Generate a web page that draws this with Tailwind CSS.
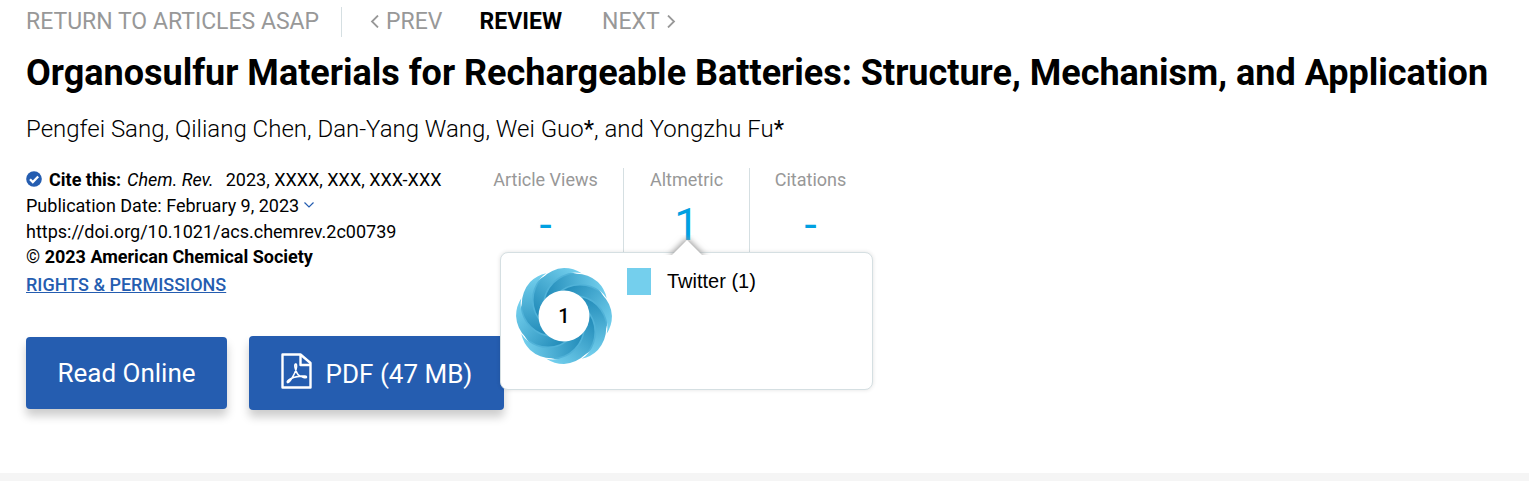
<!DOCTYPE html>
<html lang="en">
<head>
<meta charset="utf-8">
<title>Organosulfur Materials for Rechargeable Batteries</title>
<script src="https://cdn.jsdelivr.net/npm/@tailwindcss/browser@4"></script>
</head>
<body class="bg-white font-[Roboto,sans-serif] text-black">
<main class="px-[26px] pt-[7px]">
  <nav class="flex h-[30px] items-center text-[23px] leading-[28px] text-[#989898]" aria-label="Article navigation">
    <a href="#" class="mr-[22px]">RETURN TO ARTICLES ASAP</a>
    <a href="#" class="flex h-[30px] items-center gap-[7px] border-l border-[#d5dfe2] pl-[28px]">
      <svg class="mb-0.5 h-[13px] w-[9px]" viewBox="0 0 9 13" fill="none" stroke="currentColor" stroke-width="1.8"><path d="M8 .5 2 6.500 8 12.500"/></svg>PREV</a>
    <span class="ml-[37px] font-bold text-black">REVIEW</span>
    <a href="#" class="ml-[40px] flex items-center gap-[7px]">NEXT<svg class="mb-0.5 h-[13px] w-[9px]" viewBox="0 0 9 13" fill="none" stroke="currentColor" stroke-width="1.8"><path d="M1 .5 7 6.500 1 12.500"/></svg></a>
  </nav>
  <h1 class="mt-[12px] text-[36px] leading-[48px] font-bold">Organosulfur Materials for Rechargeable Batteries: Structure, Mechanism, and Application</h1>
  <p class="mt-[16px] text-[24px] leading-[32px] font-light">Pengfei Sang, Qiliang Chen, Dan-Yang Wang, Wei Guo<span class="font-normal">*</span>, and Yongzhu Fu<span class="font-normal">*</span></p>

  <div class="mt-[22px] flex items-start">
    <section class="w-[442px] text-[18px] leading-[26px]">
      <p class="flex items-center"><svg class="mr-[7px] mb-0.5 h-4 w-4" viewBox="0 0 16 16"><circle cx="8" cy="8" r="7.800" fill="#255db0"/><path d="m4 8.200 2.800 2.800L12.200 5.500" fill="none" stroke="#fff" stroke-width="2.300"/></svg><b class="mr-[6px] font-bold">Cite this:</b><i class="mr-[12px] font-normal">Chem. Rev.</i>2023, XXXX, XXX, XXX-XXX</p>
      <p class="flex items-center">Publication Date: February 9, 2023<button type="button" aria-label="Show publication history" class="mb-0.5 ml-[5px] text-[#255db0]"><svg class="h-[6px] w-[10px]" viewBox="0 0 10 6" fill="none" stroke="currentColor" stroke-width="1.200"><path d="m.5.5 4.500 4.500L9.500.5"/></svg></button></p>
      <p><a href="#">https://doi.org/10.1021/acs.chemrev.2c00739</a></p>
      <p class="leading-6 font-bold"><span class="font-normal">©</span> 2023 American Chemical Society</p>
      <p class="mt-[3px]"><a href="#" class="font-medium text-[#255db0] underline">RIGHTS &amp; PERMISSIONS</a></p>
    </section>
    <section class="relative flex h-[90px] pt-px text-center text-[18px] leading-6 text-[#989898]" aria-label="Article metrics">
      <div class="w-[155px]"><div>Article Views</div><div class="mt-[7px] text-[44px] leading-[52px] text-[#00a0e1]">-</div></div>
      <div class="w-[127px] border-x border-[#d5dfe2]"><div>Altmetric</div><a href="#" class="mt-[7px] block text-[44px] leading-[52px] text-[#00a0e1]">1</a></div>
      <div class="w-[121px]"><div>Citations</div><div class="mt-[7px] text-[44px] leading-[52px] text-[#00a0e1]">-</div></div>

      <div role="tooltip" class="absolute top-[85px] left-[32px] z-10 flex h-[138px] w-[373px] items-start rounded-lg border border-[#d5dfe2] bg-white p-[15px] text-left text-black shadow-[0_0_4px_rgba(0,0,0,0.12)]">
        <svg class="absolute -top-[18px] left-[162px] h-[24px] w-[48px]" viewBox="0 0 48 24"><defs><filter id="soft" x="-30%" y="-30%" width="160%" height="160%"><feGaussianBlur stdDeviation="3"/></filter><clipPath id="tip"><path d="M0 0H48V20H0Z"/></clipPath></defs><g clip-path="url(#tip)"><path d="M24 3 43 22H5Z" fill="#999" filter="url(#soft)"/></g><path d="M24 5 43 24H5Z" fill="#fff"/></svg>
        <svg class="h-24 w-24" viewBox="-48 -48 96 96" role="img" aria-label="Altmetric score 1">
          <defs>
            <linearGradient id="shade" gradientUnits="userSpaceOnUse" x1="42" y1="-22" x2="-16" y2="-16"><stop offset="0" stop-color="#74d0ee"/><stop offset="1" stop-color="#258ebb"/></linearGradient>
            <path id="strand" fill="url(#shade)" d="M42.700-17.700A32 32 0 0 0-16 0L-11.300 11.300A32 32 0 0 1 33.900-33.900A32 32 0 0 1 42.700-17.700Z"/>
          </defs>
          <circle r="44" fill="#50b2d8"/>
          <use href="#strand"/><use href="#strand" transform="rotate(45)"/><use href="#strand" transform="rotate(90)"/><use href="#strand" transform="rotate(135)"/><use href="#strand" transform="rotate(180)"/><use href="#strand" transform="rotate(225)"/><use href="#strand" transform="rotate(270)"/><use href="#strand" transform="rotate(315)"/>
          <circle r="25.500" fill="#fff"/><text y="7" text-anchor="middle" font-family="Roboto" font-size="20" font-weight="500" fill="#000">1</text>
        </svg>
        <div class="ml-[15px] flex items-center gap-4 font-['Liberation_Sans',Arial,sans-serif] text-[20px] leading-6"><span class="h-[27px] w-6 bg-[#74cfed]"></span><span class="pb-0.5">Twitter (1)</span></div>
      </div>
    </section>
  </div>

  <div class="mt-[38px] flex items-center gap-[22px] text-[26px] text-white">
    <button type="button" class="h-[72px] w-[201px] rounded bg-[#255db0] shadow-[0_7px_10px_rgba(0,0,0,0.2)]">Read Online</button>
    <button type="button" class="flex h-[74px] w-[255px] items-center justify-center gap-[14px] rounded bg-[#255db0] shadow-[0_7px_10px_rgba(0,0,0,0.2)]"><svg class="mb-1 h-9 w-[31px]" viewBox="0 0 31 36" fill="none" stroke="#fff" stroke-width="2.400" stroke-linejoin="round"><path d="M1.500 1.500H19.500L29.500 10V34.500H1.500ZM19.500 1.500V12H29.500"/><path stroke-width="1.600" stroke-linecap="round" d="M14.500 11C12.500 12 15.500 20 17 21.500 19 23.500 25.500 26 25.500 24 25.500 22 16 23.500 12.500 24.500 9 26 5.500 28 6.500 29.500 8 31 16.500 17.500 15.500 12 15.200 10.800 14.500 11 14.500 11Z"/></svg><span class="pt-0.5">PDF (47 MB)</span></button>
  </div>
</main>
<div class="mt-[63px] h-2 bg-[#f5f5f5]"></div>
</body>
</html>
